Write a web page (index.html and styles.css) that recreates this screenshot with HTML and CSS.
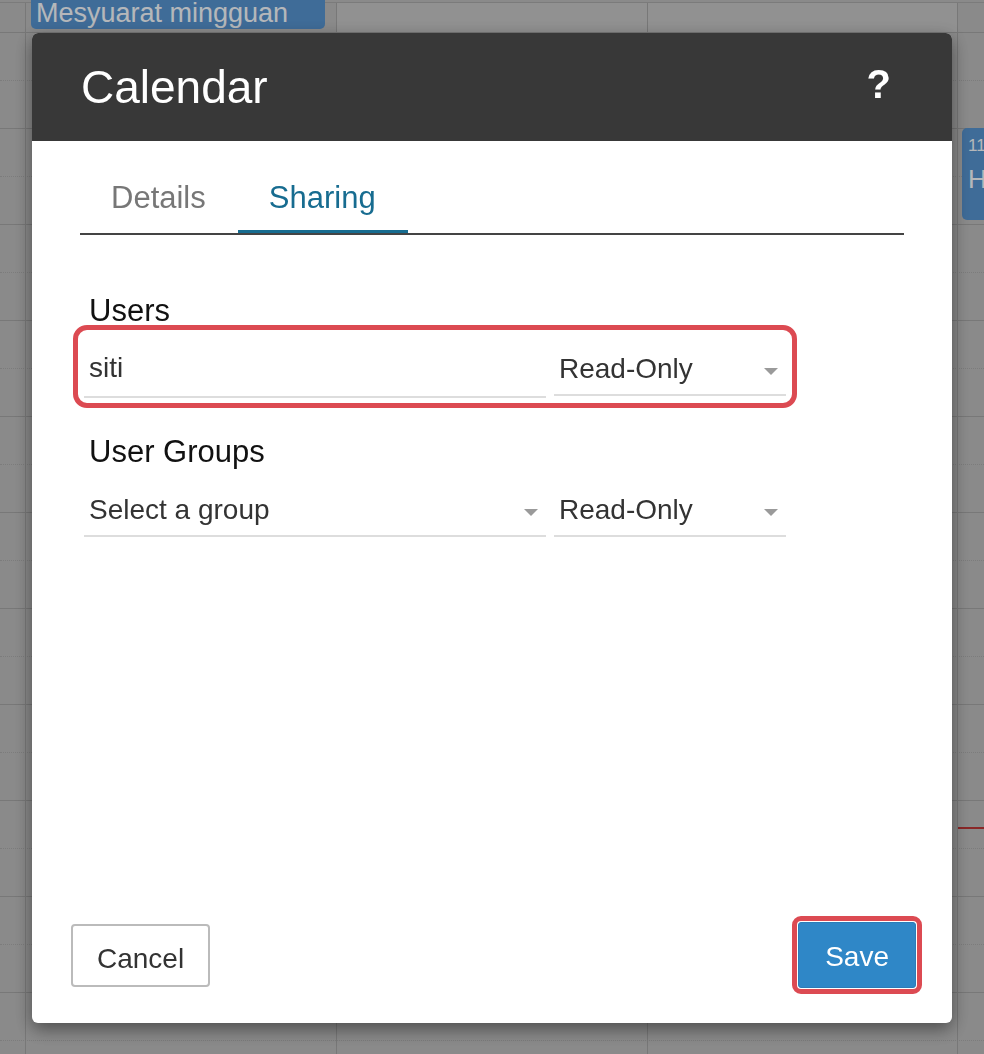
FILE: index.html
```html
<!DOCTYPE html>
<html lang="en">
<head>
	<meta charset="UTF-8">
	<title>Calendar</title>
	<link rel="stylesheet" href="styles.css">
</head>
<body>
	<div class="calendar">
		<div class="cal-allday">
			<div class="cal-gutter"></div>
			<div class="cal-day"><div class="cal-event cal-event-allday">Mesyuarat mingguan</div></div>
			<div class="cal-day cal-day-light"></div>
			<div class="cal-day cal-day-light cal-day-narrow"></div>
			<div class="cal-day cal-day-last"></div>
		</div>
		<div class="cal-body">
			<div class="cal-slats">
				<div class="slot minor"></div><div class="slot"></div>
				<div class="slot minor"></div><div class="slot"></div>
				<div class="slot minor"></div><div class="slot"></div>
				<div class="slot minor"></div><div class="slot"></div>
				<div class="slot minor"></div><div class="slot"></div>
				<div class="slot minor"></div><div class="slot"></div>
				<div class="slot minor"></div><div class="slot"></div>
				<div class="slot minor"></div><div class="slot"></div>
				<div class="slot minor"></div><div class="slot"></div>
				<div class="slot minor"></div><div class="slot"></div>
				<div class="slot minor"></div><div class="slot"></div>
			</div>
			<div class="cal-cols">
				<div class="cal-gutter"></div>
				<div class="cal-col"></div>
				<div class="cal-col"></div>
				<div class="cal-col cal-day-narrow"></div>
				<div class="cal-col cal-day-last">
					<div class="cal-event cal-event-timed">
						<div class="cal-event-time">11</div>
						<div class="cal-event-title">H</div>
					</div>
					<div class="cal-now"></div>
				</div>
			</div>
		</div>
	</div>

	<div class="backdrop">
		<div class="modal">
			<div class="modal-header">
				<h1 class="modal-title">Calendar</h1>
				<a href="#" class="modal-help">?</a>
			</div>
			<div class="modal-body">
				<ul class="tabs">
					<li class="tab"><a href="#">Details</a></li>
					<li class="tab active"><a href="#">Sharing</a></li>
				</ul>
				<div class="share-form">
					<div class="share-group">
						<label class="share-label" for="share-user">Users</label>
						<div class="share-row is-focused">
							<input id="share-user" class="field" type="text" value="siti">
							<div class="select-wrap">
								<select class="field field-select">
									<option>Read-Only</option>
									<option>Read-Write</option>
								</select>
							</div>
						</div>
					</div>
					<div class="share-group">
						<label class="share-label">User Groups</label>
						<div class="share-row">
							<div class="select-wrap">
								<select class="field field-select">
									<option>Select a group</option>
								</select>
							</div>
							<div class="select-wrap">
								<select class="field field-select">
									<option>Read-Only</option>
									<option>Read-Write</option>
								</select>
							</div>
						</div>
					</div>
				</div>
			</div>
			<div class="modal-footer">
				<button class="btn btn-default">Cancel</button>
				<button class="btn btn-primary is-focused">Save</button>
			</div>
		</div>
	</div>
</body>
</html>
```

FILE: styles.css
```css
body,ul,li,div,h1{
	margin: 0;
	padding: 0;
}
ul,li{
	list-style: none;
}
body{
	font-family: "Liberation Sans", Arial, sans-serif;
	background: #b9b9b9;
	height: 1054px;
	overflow: hidden;
}

/* calendar behind the dialog */
.calendar{
	position: relative;
	padding-top: 2px;
}
.cal-allday{
	display: flex;
	height: 31px;
	border-top: 1px solid #a4a4a4;
	border-bottom: 1px solid #a0a0a0;
	box-sizing: border-box;
}
.cal-gutter{
	width: 25px;
	flex: none;
}
.cal-day,
.cal-col{
	width: 311px;
	flex: none;
	border-left: 1px solid #a0a0a0;
	box-sizing: border-box;
	position: relative;
}
.cal-day-light{
	background: #c2c2c2;
}
.cal-day-narrow{
	width: 310px;
}
.cal-day-last{
	flex: 1;
	width: auto;
}
.cal-event{
	background: #5490cb;
	color: #f2f5f8;
	overflow: hidden;
}
.cal-event-allday{
	margin: -12px 11px 0 5px;
	height: 38px;
	border-radius: 0 0 5px 5px;
	font-size: 27px;
	line-height: 26px;
	padding: 9px 5px 0;
	box-sizing: border-box;
	white-space: nowrap;
}
.cal-body{
	position: relative;
}
.slot{
	height: 48px;
	border-bottom: 1px solid #a0a0a0;
	box-sizing: border-box;
}
.slot.minor{
	border-bottom: 1px dotted #a6a6a6;
}
.cal-cols{
	position: absolute;
	top: 0;
	left: 0;
	right: 0;
	bottom: 0;
	display: flex;
}
.cal-event-timed{
	position: absolute;
	top: 95px;
	left: 4px;
	right: 0;
	height: 92px;
	border-radius: 5px 0 0 5px;
	padding: 8px 0 0 6px;
	box-sizing: border-box;
}
.cal-event-time{
	font-size: 17px;
	line-height: 20px;
}
.cal-event-title{
	font-size: 26px;
	line-height: 34px;
	margin-top: 6px;
}
.cal-now{
	position: absolute;
	top: 794px;
	left: 0;
	right: 0;
	height: 2px;
	background: #b83434;
}

/* dialog */
.backdrop{
	position: fixed;
	top: 0;
	left: 0;
	right: 0;
	bottom: 0;
	background: rgba(0,0,0,0.25);
}
.modal{
	width: 920px;
	height: 990px;
	margin: 33px auto 0;
	background: #fff;
	border-radius: 6px;
	display: flex;
	flex-direction: column;
	box-shadow: 0 6px 18px rgba(0,0,0,0.45);
}
.modal-header{
	height: 108px;
	flex: none;
	background: #383838;
	border-radius: 6px 6px 0 0;
	display: flex;
	align-items: center;
	justify-content: space-between;
	padding: 0 61px 0 49px;
	color: #fff;
}
.modal-title{
	font-size: 46px;
	font-weight: normal;
}
.modal-help{
	color: #fff;
	font-size: 40px;
	font-weight: bold;
	text-decoration: none;
	margin-bottom: 6px;
}
.modal-body{
	flex: 1;
	padding: 29px 48px 0;
}
.tabs{
	display: flex;
	border-bottom: 2px solid #444;
}
.tab a{
	display: block;
	font-size: 31px;
	line-height: 36px;
	padding: 10px 32px 14px 31px;
	color: #777;
	text-decoration: none;
	border-bottom: 3px solid transparent;
}
.tab.active a{
	color: #176c90;
	border-bottom-color: #176c90;
}
.share-form{
	margin-top: 62px;
}
.share-group{
	width: 714px;
	margin-left: -2px;
}
.share-group + .share-group{
	margin-top: 35px;
}
.share-label{
	display: block;
	font-size: 31px;
	line-height: 28px;
	padding-left: 11px;
	margin-bottom: 5px;
	color: #111;
}
.share-row{
	display: grid;
	grid-template-columns: 1fr 232px;
	gap: 8px;
	align-items: start;
	padding: 15px 6px 5px;
	border-radius: 9px;
}
.is-focused{
	outline: 5px solid #dc4a52;
}
.field{
	display: block;
	width: 100%;
	box-sizing: border-box;
	font-family: "Liberation Sans", Arial, sans-serif;
	font-size: 28px;
	line-height: 32px;
	color: #333;
	border: 0;
	border-bottom: 2px solid #ddd;
	border-radius: 0;
	padding: 7px 5px 12px;
	background: #fff;
	outline: none;
}
.field-select{
	-webkit-appearance: none;
	appearance: none;
	height: 51px;
	padding: 8px 30px 9px 5px;
}
.select-wrap{
	position: relative;
}
.select-wrap:after{
	content: "";
	position: absolute;
	top: 23px;
	right: 8px;
	border-left: 7px solid transparent;
	border-right: 7px solid transparent;
	border-top: 7px solid #9a9a9a;
	pointer-events: none;
}
.modal-footer{
	display: flex;
	justify-content: space-between;
	align-items: center;
	padding: 0 36px 35px 39px;
}
.btn{
	font-family: "Liberation Sans", Arial, sans-serif;
	font-size: 28px;
	line-height: 32px;
	border-radius: 4px;
	cursor: pointer;
}
.btn-default{
	background: #fff;
	color: #333;
	border: 2px solid #bbb;
	padding: 17px 24px 10px;
}
.btn-primary{
	background: #2f87c7;
	color: #fff;
	border: 1px solid #2b7cb8;
	padding: 18px 26px 14px;
	outline-offset: 1px;
	border-radius: 3px;
}
```
